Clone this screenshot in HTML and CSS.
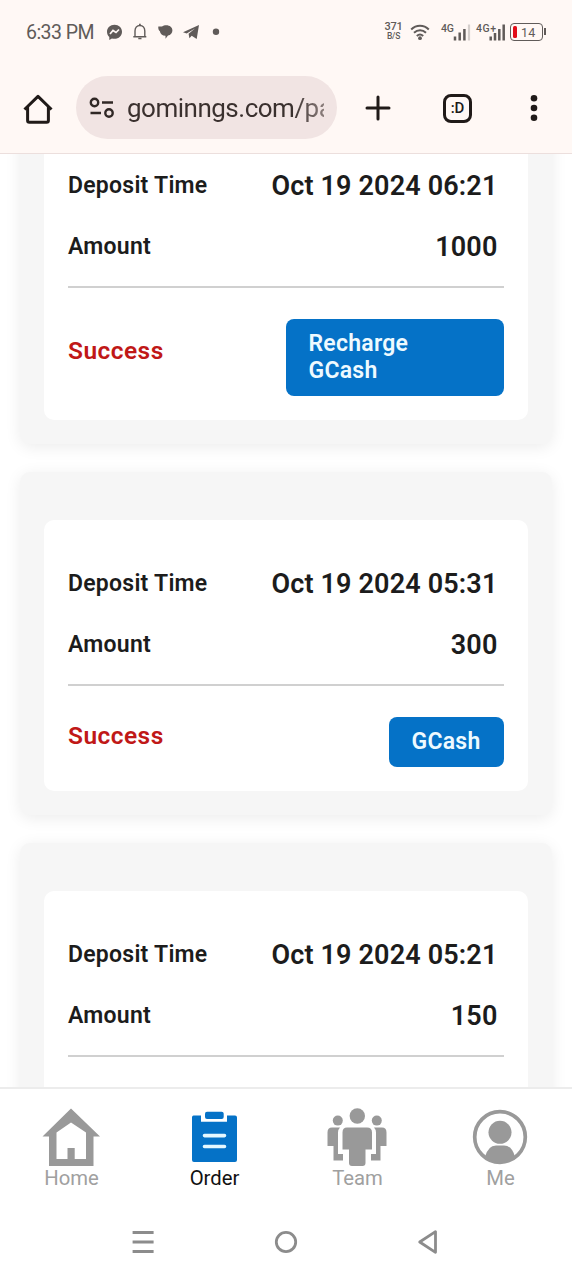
FILE: index.html
```html
<!DOCTYPE html>
<html lang="en">
<head>
<meta charset="utf-8">
<title>Orders</title>
<link rel="stylesheet" href="styles.css">
</head>
<body>
<div class="screen">
  <header class="status">
    <span class="clock">6:33 PM</span>
    <svg class="status-left" width="120" height="22" viewBox="0 0 120 22">
      <path fill="#605b59" d="M9.500 3.700c-4.300 0-7.500 3-7.500 7 0 2.100.9 3.900 2.300 5.200v3.100l2.600-1.500c.8.200 1.700.3 2.600.3 4.300 0 7.500-3.100 7.500-7.100s-3.200-7-7.500-7z"/>
      <path d="M5 13l3-3.500 3 2 3-3" fill="none" stroke="#fff8f5" stroke-width="1.700"/>
      <path d="M28.300 15.700h13M30 15.700V10c0-3.200 2-5.500 4.900-5.500s4.900 2.300 4.900 5.500v5.700" fill="none" stroke="#605b59" stroke-width="1.400"/>
      <path d="M34.900 2.800v2M33.300 17.500h3.200" stroke="#605b59" stroke-width="1.700"/>
      <path fill="#605b59" d="M53.300 5.500H57c1.200-.9 2.600-1.200 4.200-1.200 3.700 0 6.200 2.200 6.200 5.200 0 2.700-1.800 4.600-4.400 5.100L60.500 17.800v-3c-3.200-.2-5.300-2-5.600-4.600-1.100-.8-1.900-2.400-1.600-4.700z"/>
      <path fill="#605b59" d="M78 11.300L94 4l-2.300 14-5-3.300-2.300 2.600-.8-4.600L90 7.500l-8.300 5z"/>
      <circle cx="111" cy="10.700" r="3.200" fill="#605b59"/>
    </svg>
    <span class="speed"><b>371</b><i>B/S</i></span>
    <svg class="status-right" width="100" height="28" viewBox="0 0 100 28">
      <g fill="none" stroke="#605b59" stroke-width="2">
        <path d="M1.200 12.500c5-5 12.600-5 17.600 0"/><path d="M4 15.800c3.600-3.400 8.500-3.400 12 0"/><path d="M6.800 19c2-1.800 4.400-1.800 6.400 0"/>
      </g>
      <circle cx="10" cy="21.200" r="1.900" fill="#605b59"/>
      <g class="network">
        <text x="31" y="15" textLength="13">4G</text><text x="66" y="15" textLength="20">4G+</text>
      </g>
      <path stroke="#605b59" stroke-width="2.500" d="M45 19.500v4M49.700 15.500v8M54.400 12v11.500M80.700 19.500v4M85 16v7.500M89.300 12v11.500M93.700 7.500v16"/>
      <path stroke="#d5cfcc" stroke-width="2.200" d="M59 7.500v16"/>
    </svg>
    <div class="battery"><span class="charge"></span><span>14</span></div>
  </header>

  <nav class="toolbar">
    <svg class="tb-home" width="30" height="30" viewBox="0 0 30 30" fill="none" stroke="#201a18" stroke-width="3" stroke-linejoin="round"><path d="M1.500 15.500L15 2.400l13.500 13.100"/><path d="M4.600 13V26.500q0 1.800 1.800 1.800h17.200q1.800 0 1.800-1.800V13"/></svg>
    <div class="url">
      <svg width="26" height="22" viewBox="0 0 26 22" fill="none" stroke="#302826" stroke-width="2.400"><circle cx="5.500" cy="5.500" r="3.700"/><path d="M13 5.500h11M1.500 16H12"/><circle cx="20" cy="16" r="3.700"/></svg>
      <span class="address">gominngs.com/pa</span>
    </div>
    <svg class="tb-plus" width="26" height="26" viewBox="0 0 26 26" stroke="#201a18" stroke-width="3" stroke-linecap="round"><path d="M13 2v22M2 13h22"/></svg>
    <span class="tabs">:D</span>
    <svg class="tb-more" width="8" height="28" viewBox="0 0 8 28" fill="#201a18"><circle cx="4" cy="4.300" r="3.300"/><circle cx="4" cy="14" r="3.300"/><circle cx="4" cy="23.700" r="3.300"/></svg>
  </nav>

  <main class="orders">
    <section class="card">
      <div class="panel">
        <div class="row"><span class="label">Deposit Time</span><span class="value">Oct 19 2024 06:21</span></div>
        <div class="row"><span class="label">Amount</span><span class="value">1000</span></div>
        <div class="foot tall"><span class="state">Success</span><span class="button wide">Recharge<br>GCash</span></div>
      </div>
    </section>
    <section class="card">
      <div class="panel">
        <div class="row"><span class="label">Deposit Time</span><span class="value">Oct 19 2024 05:31</span></div>
        <div class="row"><span class="label">Amount</span><span class="value">300</span></div>
        <div class="foot"><span class="state">Success</span><span class="button">GCash</span></div>
      </div>
    </section>
    <section class="card">
      <div class="panel">
        <div class="row"><span class="label">Deposit Time</span><span class="value">Oct 19 2024 05:21</span></div>
        <div class="row"><span class="label">Amount</span><span class="value">150</span></div>
        <div class="foot"></div>
      </div>
    </section>
  </main>

  <nav class="menu">
    <a class="item">
      <svg width="60" height="60" viewBox="0 0 60 60" fill="#999" fill-rule="evenodd"><path d="M30 1.500L59 29.500h-6.500V59H8V29.500H1.500zM30 15.500L15.500 25.500V52H26.500V41h7.200v11H45V25.500z"/></svg>
      <span>Home</span>
    </a>
    <a class="item active">
      <svg width="60" height="60" viewBox="0 0 60 60"><path fill="#0572c7" d="M9.500 8.500H17v6.200h26V8.500h8q2 0 2 2V53q0 2-2 2H10q-2 0-2-2V10.500q0-2 1.500-2z"/><rect x="21" y="4.700" width="18.700" height="7.300" rx="2" fill="#0572c7"/><path d="M20.500 28.600h20M20.500 39.500h20" stroke="#e5f8ff" stroke-width="3.600" stroke-linecap="round"/></svg>
      <span>Order</span>
    </a>
    <a class="item">
      <svg width="60" height="60" viewBox="0 0 60 60" fill="#999"><circle cx="30.300" cy="9" r="7.700"/><circle cx="10.800" cy="13.600" r="5"/><circle cx="49.800" cy="13.600" r="5"/><path d="M20 20.500h20q5 0 5 5V42.500h-6.500V56q0 3-3 3H25q-3 0-3-3V42.500h-6.500V25.500q0-5 4.500-5zM5 20.500h8q-2 2-2 5V47h5v6.500H6.500V39H.500V25.500q0-5 4.500-5zM55 20.500h-8q2 2 2 5V47h-5v6.500h9.500V39h6V25.500q0-5-4.500-5z"/></svg>
      <span>Team</span>
    </a>
    <a class="item">
      <svg width="60" height="60" viewBox="0 0 60 60" fill="#999"><circle cx="30" cy="30" r="25.300" fill="none" stroke="#999" stroke-width="3.700"/><circle cx="30" cy="25.300" r="11.500"/><path d="M15 50q3-11.500 11-11.500h8q8 0 11 11.500-15 11-30 0z"/></svg>
      <span>Me</span>
    </a>
  </nav>

  <footer class="system">
    <svg width="24" height="26" viewBox="0 0 24 26"><path d="M1.600 3.500h21M1.600 13h21M1.600 22.500h21" stroke="#8c8c8c" stroke-width="2.900"/></svg>
    <svg width="24" height="26" viewBox="0 0 24 26"><circle cx="12" cy="13" r="9.700" fill="none" stroke="#8c8c8c" stroke-width="2.800"/></svg>
    <svg width="24" height="26" viewBox="0 0 24 26"><path d="M2.700 13L18.500 2.700v20.600z" fill="none" stroke="#8c8c8c" stroke-width="2.800" stroke-linejoin="round"/></svg>
  </footer>
</div>
</body>
</html>
```
FILE: styles.css
```css
* { box-sizing: border-box; }
body { margin: 0; font-family: Roboto, sans-serif; background: #fff; }
svg { display: block; flex: none; }
.screen { width: 572px; height: 1280px; display: flex; flex-direction: column; overflow: hidden; }

.status { height: 64px; flex: none; background: #fff8f5; display: flex; align-items: center; padding-left: 26px; color: #605b59; }
.clock { font-size: 19.5px; letter-spacing: -.55px; width: 79px; white-space: nowrap; }
.status-left { margin-right: 159px; }
.speed { width: 19px; text-align: center; font-size: 11px; line-height: 10px; margin-top: -3px; letter-spacing: -.2px; }
.speed b, .speed i { display: block; font-style: normal; font-weight: 500; }
.speed i { font-size: 8.5px; line-height: 8px; }
.status-right { margin-left: 7px; margin-top: -3px; }
.network { font-family: Roboto, sans-serif; font-size: 10.5px; font-weight: 500; fill: #605b59; }
.battery { position: relative; width: 33px; height: 18px; border: 1.5px solid #605b59; border-radius: 4px; display: flex; align-items: center; gap: 4px; padding-left: 1.5px; font-size: 12.5px; letter-spacing: .2px; }
.battery::after { content: ""; position: absolute; right: -4px; top: 4px; width: 2px; height: 7px; background: #605b59; }
.charge { width: 4.5px; height: 12.5px; border-radius: 1.5px; background: #e20c18; }

.toolbar { height: 90px; flex: none; background: #fff8f5; border-bottom: 1px solid #ecdfdd; display: flex; align-items: center; padding-left: 23px; }
.tb-home { margin-right: 23px; }
.url { width: 261px; height: 63px; border-radius: 32px; background: #f1e4e3; display: flex; align-items: center; padding: 0 13px; gap: 12px; margin-top: -2px; }
.address { width: 198px; overflow: hidden; white-space: nowrap; font-size: 26px; letter-spacing: -.5px; line-height: 34px; color: transparent; background: linear-gradient(90deg, #3a302e 84%, #8b7e7c); background-clip: text; -webkit-background-clip: text; }
.tb-plus { margin-left: 28px; margin-top: -2px; }
.tabs { width: 29px; height: 29px; margin-left: 52px; margin-top: -1px; border: 3px solid #201a18; border-radius: 8px; font-size: 15px; line-height: 22px; font-weight: 500; text-align: center; color: #201a18; }
.tb-more { margin-left: 58px; margin-top: -2px; }

.orders { flex: 1; min-height: 0; overflow: hidden; padding: 0 20.5px 0 20px; display: flex; flex-direction: column; gap: 28px; }
.card { flex: none; background: #f6f6f6; border-radius: 10px; padding: 48px 24px 24px; box-shadow: 0 3px 16px rgba(0,0,0,.08); }
.card:first-child { margin-top: -80px; }
.panel { background: #fff; border-radius: 10px; padding: 32px 24px 24px; }
.row { height: 61px; display: flex; justify-content: space-between; align-items: flex-start; padding-right: 6px; line-height: 64px; }
.label { font-size: 23px; letter-spacing: .25px; font-weight: 600; color: #1c1c1c; }
.value { font-size: 27px; letter-spacing: .15px; font-weight: 600; color: #1c1c1c; }
.foot { height: 83px; border-top: 2px solid #d0d0d0; padding-top: 31px; margin-top: 10px; display: flex; justify-content: space-between; align-items: flex-start; }
.foot.tall { height: 110px; }
.state { color: #c01817; font-size: 24.5px; letter-spacing: .45px; font-weight: 600; line-height: 38px; }
.tall .state { line-height: 64px; }
.button { background: #0572c7; color: #eefaff; border-radius: 8px; padding: 11px 23px 12px; font-size: 23px; letter-spacing: .25px; line-height: 27px; font-weight: 600; }
.button.wide { width: 218px; }

.menu { height: 117px; flex: none; border-top: 2px solid #ececec; display: grid; grid-template-columns: repeat(4, 143px); background: #fff; padding-top: 18px; }
.item { display: flex; flex-direction: column; align-items: center; color: #a0a0a0; font-size: 20.3px; line-height: 22px; }
.item svg { margin-right: 1px; }
.item.active { color: #111; }
.system { flex: none; height: 76px; background: #fff; display: flex; justify-content: center; align-items: center; gap: 119px; }
```
